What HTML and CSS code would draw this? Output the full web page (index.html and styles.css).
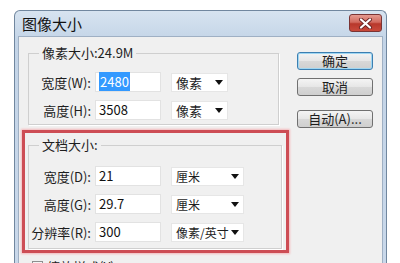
FILE: index.html
```html
<!DOCTYPE html>
<html lang="zh-CN">

<head>
    <meta charset="UTF-8">
    <title>图像大小</title>
    <link rel="stylesheet" href="styles.css">
</head>

<body>
    <div class="window">
        <div class="titlebar">
            <span class="title">图像大小</span>
            <span class="close">
                <svg width="17" height="11" viewBox="0 0 17 11">
                    <path d="M4 1.5 L13 9.5 M13 1.5 L4 9.5" stroke="#6a2424" stroke-width="4" stroke-linecap="round" fill="none"/>
                    <path d="M4 1.5 L13 9.5 M13 1.5 L4 9.5" stroke="#ffffff" stroke-width="2.2" stroke-linecap="round" fill="none"/>
                </svg>
            </span>
        </div>
        <div class="content">
            <div class="main">
                <fieldset class="group pixel">
                    <legend>像素大小:24.9M</legend>
                    <div class="row">
                        <label>宽度(W):</label>
                        <div class="field"><span class="selected">2480</span></div>
                        <div class="unit">像素<i class="arrow"></i></div>
                    </div>
                    <div class="row">
                        <label>高度(H):</label>
                        <div class="field">3508</div>
                        <div class="unit">像素<i class="arrow"></i></div>
                    </div>
                </fieldset>

                <div class="highlight">
                    <fieldset class="group doc">
                        <legend>文档大小:</legend>
                        <div class="row">
                            <label>宽度(D):</label>
                            <div class="field">21</div>
                            <div class="unit wide">厘米<i class="arrow"></i></div>
                        </div>
                        <div class="row">
                            <label>高度(G):</label>
                            <div class="field">29.7</div>
                            <div class="unit wide">厘米<i class="arrow"></i></div>
                        </div>
                        <div class="row">
                            <label>分辨率(R):</label>
                            <div class="field">300</div>
                            <div class="unit wide">像素/英寸<i class="arrow"></i></div>
                        </div>
                    </fieldset>
                </div>

                <div class="check"><span class="box"></span>缩放样式(Y)</div>
            </div>

            <div class="actions">
                <button class="btn default">确定</button>
                <button class="btn">取消</button>
                <button class="btn auto">自动(A)...</button>
            </div>
        </div>
    </div>
</body>

</html>
```

FILE: styles.css
```css
* {
    margin: 0;
    padding: 0;
    box-sizing: border-box;
}

html,
body {
    height: 263px;
    overflow: hidden;
}

body {
    background: #ffffff;
    font-family: "Noto Sans CJK SC", "Liberation Sans", sans-serif;
    font-size: 13px;
    color: #1e1e1e;
}

.window {
    margin: 10px 0 0 14px;
    width: 373px;
    height: 253px;
    border: 1px solid #71879f;
    border-bottom: 0;
    border-radius: 6px 6px 0 0;
    padding: 0 3px;
    background: linear-gradient(#d7e3f0, #c3d4e7 30px, #c9d8ea);
    display: flex;
    flex-direction: column;
}

.titlebar {
    height: 25px;
    flex-shrink: 0;
    display: flex;
    justify-content: space-between;
    align-items: flex-start;
}

.title {
    margin: 4px 0 0 4px;
    font-size: 15px;
    line-height: 18px;
    color: #111;
}

.close {
    margin: 3px 1px 0 0;
    width: 33px;
    height: 18px;
    border: 1px solid #7a3434;
    border-radius: 3px;
    background: linear-gradient(#e59a90, #d26a5e 45%, #b8382b 55%, #c94a3c);
    display: flex;
    align-items: center;
    justify-content: center;
}

.content {
    flex: 1;
    display: flex;
    gap: 8px;
    overflow: hidden;
    background: #f0f0f0;
    border: 1px solid #9fb0c4;
    border-bottom: 0;
    padding: 0 9px 0 3px;
}

.main {
    width: 267px;
    flex-shrink: 0;
}

.group {
    border: 1px solid #cfcfcf;
    box-shadow: 1px 1px 0 #ffffff;
}

.group legend {
    margin-left: 10px;
    padding: 0 3px;
    line-height: 16px;
}

.pixel {
    margin: 8px 0 0 6px;
    width: 251px;
    padding: 11px 0 4px;
}

.doc {
    padding: 13px 0 6px;
}

.row {
    display: flex;
    align-items: center;
    height: 20px;
    margin-bottom: 8px;
}

.row:last-child {
    margin-bottom: 0;
}

.row label {
    width: 62px;
    text-align: right;
    margin-right: 4px;
    white-space: nowrap;
}

.field {
    width: 66px;
    height: 20px;
    background: #ffffff;
    border: 1px solid #e2e2e2;
    padding-left: 3px;
    line-height: 18px;
    color: #111;
}

.selected {
    background: #3399ff;
    color: #ffffff;
    padding: 0 1px;
}

.unit {
    margin-left: 10px;
    width: 57px;
    height: 19px;
    background: #ffffff;
    border: 1px solid #e6e6e6;
    padding: 0 4px;
    display: flex;
    align-items: center;
    justify-content: space-between;
    white-space: nowrap;
    line-height: 17px;
}

.unit.wide {
    width: 73px;
    font-size: 12px;
}

.arrow {
    flex-shrink: 0;
    width: 0;
    height: 0;
    border-left: 4px solid transparent;
    border-right: 4px solid transparent;
    border-top: 5px solid #111;
}

.highlight {
    margin-top: 5px;
    border: 3px solid #cd4d55;
    box-shadow: 0 0 2px 1px #f4b8bb;
    padding: 4px 4px 1px 3px;
}

.check {
    margin: 4px 0 0 10px;
    display: flex;
    align-items: center;
    gap: 4px;
}

.check .box {
    width: 11px;
    height: 11px;
    border: 1px solid #8e8f8f;
    background: #f4f4f4;
}

.actions {
    display: flex;
    flex-direction: column;
    padding-top: 15px;
}

.btn {
    width: 76px;
    height: 18px;
    border: 1px solid #707070;
    border-radius: 3px;
    background: linear-gradient(#f4f4f4, #e6e6e6 50%, #d8d8d8 51%, #cfcfcf);
    font-family: inherit;
    font-size: 13px;
    line-height: 14px;
    color: #1e1e1e;
    margin-bottom: 8px;
}

.btn.default {
    border-color: #3c7fb1;
    box-shadow: inset 0 0 0 1px #9fd6f2;
}

.btn.auto {
    margin-top: 6px;
}
```
